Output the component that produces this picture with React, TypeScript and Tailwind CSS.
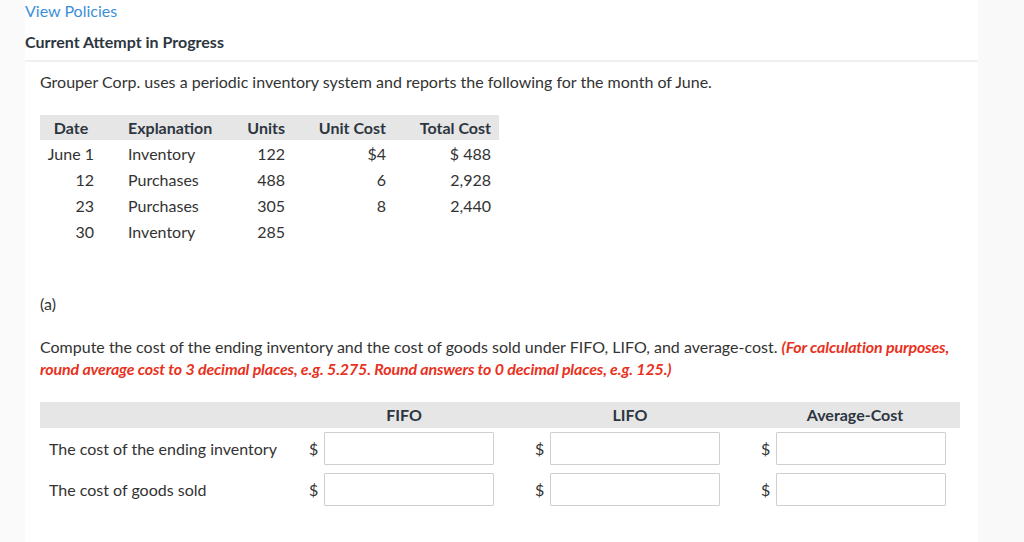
import React from "react";

const font = { fontFamily: "Lato, 'Noto Sans', sans-serif" };

function Input() {
  return <div className="w-[170px] h-[33px] border border-[#cfcfcf] bg-white rounded-[1px]" />;
}

function Cell() {
  return (
    <div className="flex items-center">
      <span className="w-[32px] pl-[17px] text-[16px] text-[#333]">$</span>
      <Input />
    </div>
  );
}

export default function App() {
  const rows = [
    ["June 1", "Inventory", "122", "$4", "$ 488"],
    ["12", "Purchases", "488", "6", "2,928"],
    ["23", "Purchases", "305", "8", "2,440"],
    ["30", "Inventory", "285", "", ""],
  ];
  const td = "align-top pt-[4px] leading-[20px]";
  return (
    <div className="flex h-[542px] overflow-hidden text-[#333940]" style={font}>
      <div className="w-[25px] bg-[#fafafa]" />
      <div className="w-[953px] bg-white">
        <div className="h-[22px] leading-[22px] text-[16px] text-[#3b8fd9]">View Policies</div>
        <div className="mt-[9px] h-[22px] leading-[22px] text-[16px] font-bold text-[#2d3640]">Current Attempt in Progress</div>
        <div className="mt-[7px] h-[2px] bg-[#f0f0f0]" />
        <div className="pl-[15px]">
          <div className="mt-[9px] h-[22px] leading-[22px] text-[16px] text-[#333]">
            Grouper Corp. uses a periodic inventory system and reports the following for the month of June.
          </div>
          <table className="mt-[22px] border-collapse text-[16px] text-[#333]">
            <thead>
              <tr className="bg-[#e6e6e6] h-[25px] font-bold text-[#2d3640]">
                <th className="w-[62px] text-center font-bold">Date</th>
                <th className="w-[130px] pl-[26px] text-left font-bold">Explanation</th>
                <th className="w-[61px] pr-[8px] text-right font-bold">Units</th>
                <th className="w-[101px] pr-[8px] text-right font-bold">Unit Cost</th>
                <th className="w-[105px] pr-[8px] text-right font-bold">Total Cost</th>
              </tr>
            </thead>
            <tbody>
              {rows.map((r, i) => (
                <tr key={i} className="h-[26px]">
                  <td className={`${td} pr-[8px] text-right`}>{r[0]}</td>
                  <td className={`${td} pl-[26px] text-left`}>{r[1]}</td>
                  <td className={`${td} pr-[8px] text-right`}>{r[2]}</td>
                  <td className={`${td} pr-[8px] text-right`}>{r[3]}</td>
                  <td className={`${td} pr-[8px] text-right`}>{r[4]}</td>
                </tr>
              ))}
            </tbody>
          </table>
          <div className="mt-[49px] h-[22px] leading-[22px] text-[16px] text-[#333]">(a)</div>
          <div className="mt-[21px] w-[925px] leading-[22px] text-[16px] text-[#333]">
            Compute the cost of the ending inventory and the cost of goods sold under FIFO, LIFO, and average-cost.{" "}
            <span className="font-bold italic tracking-[-0.15px] text-[#e8321e]">
              (For calculation purposes, round average cost to 3 decimal places, e.g. 5.275. Round answers to 0 decimal places, e.g. 125.)
            </span>
          </div>
          <div className="mt-[22px] w-[920px]">
            <div className="grid grid-cols-[252px_226px_226px_1fr] h-[26px] items-center bg-[#e6e6e6] text-[16px] font-bold text-[#2d3640]">
              <div />
              <div className="w-[224px] text-center">FIFO</div>
              <div className="w-[224px] text-center">LIFO</div>
              <div className="pl-[6px] text-center">Average-Cost</div>
            </div>
            <div className="grid grid-cols-[252px_226px_226px_1fr] items-center mt-[4px] h-[33px] text-[16px] text-[#333]">
              <div className="pl-[9px]">The cost of the ending inventory</div>
              <Cell />
              <Cell />
              <Cell />
            </div>
            <div className="grid grid-cols-[252px_226px_226px_1fr] items-center mt-[8px] h-[33px] text-[16px] text-[#333]">
              <div className="pl-[9px]">The cost of goods sold</div>
              <Cell />
              <Cell />
              <Cell />
            </div>
          </div>
        </div>
      </div>
      <div className="flex-1 bg-[#f9f9f9]" />
    </div>
  );
}
